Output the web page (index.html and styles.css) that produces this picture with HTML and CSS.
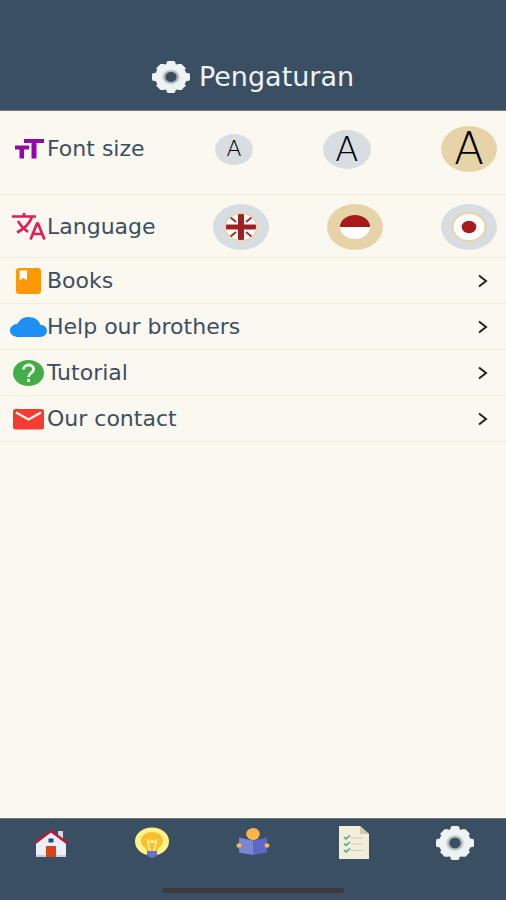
FILE: index.html
```html
<!DOCTYPE html>
<html lang="id">
<head>
    <meta charset="UTF-8">
    <meta name="viewport" content="width=device-width, initial-scale=1.0">
    <title>Pengaturan</title>
    <link rel="stylesheet" href="styles.css">
</head>
<body>

    <svg class="sprite" aria-hidden="true">
        <defs>
            <radialGradient id="hub">
                <stop offset="0.5" stop-color="#7f8b90"/>
                <stop offset="1" stop-color="#eef3f3"/>
            </radialGradient>
        </defs>
        <symbol id="gear" viewBox="0 0 38 32" preserveAspectRatio="none">
            <g fill="#eef3f3">
                <ellipse cx="19" cy="16" rx="16" ry="13.500"/>
                <rect x="14.500" y="0" width="9" height="32" rx="2"/>
                <rect x="0" y="12" width="38" height="8" rx="2"/>
                <path d="M4 7.500 8.500 3 12 3 34 24.500 29.500 29 26 29z"/>
                <path d="M34 7.500 29.500 3 26 3 4 24.500 8.500 29 12 29z"/>
            </g>
            <ellipse cx="19" cy="16" rx="9.500" ry="8" fill="url(#hub)"/>
            <ellipse cx="19" cy="16" rx="5.500" ry="4.900" fill="#3b4f63"/>
        </symbol>
    </svg>

    <header class="header">
        <svg class="header-icon" aria-hidden="true"><use href="#gear"/></svg>
        <h1>Pengaturan</h1>
    </header>

    <main class="settings">
        <div class="row row-font">
            <svg class="icon" viewBox="0 0 37 32" aria-hidden="true">
                <path fill="#9406a8" d="M14 6h20v4h-7.500v15.500h-5V10H14zM5 12.500h14v4h-5v9H9.500v-9H5z"/>
            </svg>
            <span class="label" id="font-label">Font size</span>
            <div class="options options-font" role="group" aria-labelledby="font-label">
                <button type="button" class="option small" aria-label="Small">A</button>
                <button type="button" class="option medium" aria-label="Medium">A</button>
                <button type="button" class="option large active" aria-label="Large" aria-pressed="true">A</button>
            </div>
        </div>

        <div class="row row-language">
            <svg class="icon" viewBox="0 0 37 32" aria-hidden="true">
                <g fill="none" stroke="#e31c5a" stroke-width="2.700">
                    <path d="M2 5.500h24M14 2v4M22 6C19 13.500 14 18 7 21.500M8 10c2 4 6 8 10 11"/>
                    <path d="M20.500 28.500 27 12.500h1L34.500 28.500M23 23h9"/>
                </g>
            </svg>
            <span class="label" id="language-label">Language</span>
            <div class="options" role="group" aria-labelledby="language-label">
                <button type="button" class="option flag" aria-label="English">
                    <svg viewBox="0 0 56 46" aria-hidden="true">
                        <clipPath id="uk"><ellipse cx="28" cy="23" rx="15" ry="13"/></clipPath>
                        <ellipse cx="28" cy="23" rx="16.500" ry="14.500" fill="#ead2a4"/>
                        <g clip-path="url(#uk)">
                            <path fill="#fff" d="M12 9h32v28H12z"/>
                            <path fill="none" stroke="#a92b2c" stroke-width="2" d="M17 13l6 5M39 13l-6 5M17 33l6-5M39 33l-6-5"/>
                            <path fill="#a01f20" d="M25 9h6v11.500h14v5H31V37h-6V25.500H12v-5h13z"/>
                        </g>
                    </svg>
                </button>
                <button type="button" class="option flag active" aria-label="Indonesia" aria-pressed="true">
                    <svg viewBox="0 0 56 46" aria-hidden="true">
                        <path fill="#a61b1b" d="M13 23a15 12 0 0 1 30 0z"/>
                        <path fill="#fff" d="M13 23a15 12 0 0 0 30 0z"/>
                    </svg>
                </button>
                <button type="button" class="option flag" aria-label="Japanese">
                    <svg viewBox="0 0 56 46" aria-hidden="true">
                        <ellipse cx="28" cy="23" rx="16.500" ry="14" fill="#fff" stroke="#ead2a4" stroke-width="2"/>
                        <ellipse cx="28" cy="23" rx="7.300" ry="6.200" fill="#a61b1b"/>
                    </svg>
                </button>
            </div>
        </div>

        <a href="#books" class="row">
            <svg class="icon" viewBox="0 0 37 32" aria-hidden="true">
                <rect x="6" y="3" width="25" height="26" rx="3" fill="#ff9807"/>
                <path fill="#fffaf0" d="M9.500 5.500H17v10l-3.800-2.500-3.700 2.500z"/>
            </svg>
            <span class="label">Books</span>
            <svg class="arrow" viewBox="0 0 10 14" aria-hidden="true"><path d="M1 1.500 8 7 1 12.500"/></svg>
        </a>
        <a href="#help" class="row">
            <svg class="icon" viewBox="0 0 37 32" aria-hidden="true">
                <path fill="#1e90f3" d="M9 26C3.500 26 0 23.500 0 19.500 0 16 3 13.300 7.500 12.700 9.500 8.700 13.500 6 18.500 6 24.500 6 29 9 30.200 13.700c4 .2 6.800 2.700 6.800 6 0 3.500-3 6.300-7.500 6.300z"/>
            </svg>
            <span class="label">Help our brothers</span>
            <svg class="arrow" viewBox="0 0 10 14" aria-hidden="true"><path d="M1 1.500 8 7 1 12.500"/></svg>
        </a>
        <a href="#tutorial" class="row">
            <svg class="icon" viewBox="0 0 37 32" aria-hidden="true">
                <ellipse cx="18.500" cy="16" rx="15.500" ry="13" fill="#43ad48"/>
                <path fill="none" stroke="#f5fbef" stroke-width="2.800" d="M13.500 12.500c0-2.800 2.300-4.500 5-4.500s5.200 1.700 5.200 4.300c0 3.400-5.200 3.700-5.200 7.700"/>
                <path fill="#f5fbef" d="M17 21.800h3v3h-3z"/>
            </svg>
            <span class="label">Tutorial</span>
            <svg class="arrow" viewBox="0 0 10 14" aria-hidden="true"><path d="M1 1.500 8 7 1 12.500"/></svg>
        </a>
        <a href="#contact" class="row">
            <svg class="icon" viewBox="0 0 37 32" aria-hidden="true">
                <rect x="3" y="6" width="31" height="20.500" rx="2.500" fill="#f33d33"/>
                <path fill="none" stroke="#fff6ee" stroke-width="2.300" d="M6 9.500l12.500 7 12.500-7"/>
            </svg>
            <span class="label">Our contact</span>
            <svg class="arrow" viewBox="0 0 10 14" aria-hidden="true"><path d="M1 1.500 8 7 1 12.500"/></svg>
        </a>
    </main>

    <footer class="footer">
        <nav class="tabs">
            <a href="#home" aria-label="Home">
                <svg viewBox="0 0 38 34" aria-hidden="true">
                    <path fill="#cdd9ee" d="M26 5h5v9h-5z"/>
                    <path fill="#eceff9" d="M4 17 19 5l15 12v14H4z"/>
                    <path fill="#c5cde0" d="M4 29h30v2H4z"/>
                    <path fill="none" stroke="#b71c2b" stroke-width="2.600" d="M3 17 19 5l16 12"/>
                    <path fill="#d84312" d="M14 20h10v11H14z"/>
                    <path fill="#174c80" d="M16.500 12.500h5v4h-5z"/>
                </svg>
            </a>
            <a href="#ideas" aria-label="Ideas">
                <svg viewBox="0 0 38 34" aria-hidden="true">
                    <ellipse cx="19" cy="15.500" rx="17" ry="14" fill="#fff389"/>
                    <path fill="#fbbe2c" d="M19 6c-6.500 0-11 4-11 9 0 5.500 5.500 6.500 6 10.500h10c.5-4 6-5 6-10.500 0-5-4.500-9-11-9z"/>
                    <path fill="none" stroke="#fff4a0" stroke-width="1.500" d="M17 25.500l-2.500-11 3 2 1.500-2 1.500 2 3-2-2.500 11"/>
                    <path fill="#6673c9" d="M14 25h10v4l-3 2.500h-4l-3-2.500z"/>
                </svg>
            </a>
            <a href="#reading" aria-label="Reading">
                <svg viewBox="0 0 38 34" aria-hidden="true">
                    <ellipse cx="19" cy="8" rx="6.800" ry="6" fill="#ffb54a"/>
                    <path fill="#7986d4" d="M5 11.500 19 14.500v14.500L5 26.500z"/>
                    <path fill="#5c68c3" d="M33 11.500 19 14.500v14.500l14-2.500z"/>
                    <ellipse cx="5" cy="19.500" rx="2.500" ry="2.200" fill="#ffb54a"/>
                    <ellipse cx="33" cy="19.500" rx="2.500" ry="2.200" fill="#ffb54a"/>
                </svg>
            </a>
            <a href="#notes" aria-label="Notes">
                <svg viewBox="0 0 38 34" aria-hidden="true">
                    <path fill="#f2eed9" d="M4 0h21l9 8v25H4z"/>
                    <path fill="#cfc9b0" d="M25 0l9 8h-9z"/>
                    <path stroke="#d0ccba" stroke-width="1.200" d="M16 12h12M16 18h12M16 24.500h12"/>
                    <path fill="none" stroke="#43a785" stroke-width="1.600" d="M9 11l2 2 4-3.500M9 17.500l2 2 4-3.500M9 24l2 2 4-3.500"/>
                </svg>
            </a>
            <a href="#settings" aria-label="Settings" aria-current="page">
                <svg aria-hidden="true"><use href="#gear"/></svg>
            </a>
        </nav>
        <div class="home-bar"></div>
    </footer>

</body>
</html>
```
FILE: styles.css
```css
* {
    box-sizing: border-box;
}

body {
    display: flex;
    flex-direction: column;
    min-height: 100vh;
    margin: 0;
    background-color: #fbf8ef;
    color: #3b4f63;
    font-family: "DejaVu Sans", sans-serif;
}

svg {
    display: block;
}

.sprite {
    position: absolute;
    width: 0;
    height: 0;
}

.header {
    display: flex;
    align-items: center;
    justify-content: center;
    gap: 9px;
    padding: 60px 0 16px;
    border-bottom: 1px solid #6c7780;
    background-color: #3b4f63;
}

.header-icon {
    width: 38px;
    height: 32px;
}

.header h1 {
    margin: 0;
    color: #eef3f8;
    font-size: 27px;
    font-weight: normal;
    line-height: 34px;
}

.settings {
    flex: 1;
}

.row {
    display: flex;
    align-items: center;
    padding: 7px 9px 6px 10px;
    border-bottom: 1px solid #efebdf;
    color: inherit;
    font-size: 22px;
    line-height: 32px;
    text-decoration: none;
}

.row-font {
    padding-top: 15px;
    padding-bottom: 22px;
}

.row-language {
    padding-top: 9px;
    padding-bottom: 7px;
}

.icon {
    flex: none;
    width: 37px;
    height: 32px;
}

.label {
    flex: 1;
}

.options {
    display: flex;
    align-items: center;
    justify-content: space-between;
    width: 56%;
    min-width: 284px;
}

.options-font {
    padding-left: 2px;
}

.option {
    display: flex;
    align-items: center;
    justify-content: center;
    padding: 0;
    border: 0;
    border-radius: 50%;
    background-color: #d7dde1;
    color: #000;
    font-family: "DejaVu Sans", sans-serif;
    font-weight: 200;
    line-height: 1;
}

.option.active {
    background-color: #e6d3a7;
}

.small {
    width: 38px;
    height: 31px;
    font-size: 22px;
}

.medium {
    width: 48px;
    height: 39px;
    font-size: 34px;
}

.large,
.flag {
    width: 56px;
    height: 46px;
    font-size: 44px;
}

.flag svg {
    width: 56px;
    height: 46px;
}

.arrow {
    width: 10px;
    height: 14px;
    margin-right: 9px;
    fill: none;
    stroke: #222;
    stroke-width: 2;
}

.footer {
    padding: 7px 0;
    border-top: 1px solid #6c7780;
    background-color: #3b4f63;
}

.tabs {
    display: flex;
}

.tabs a {
    display: flex;
    flex: 1;
    justify-content: center;
}

.tabs svg {
    width: 38px;
    height: 34px;
}

.home-bar {
    width: 36%;
    height: 5px;
    margin: 28px auto 0;
    border-radius: 3px;
    background-color: #3b3a3c;
}
```
